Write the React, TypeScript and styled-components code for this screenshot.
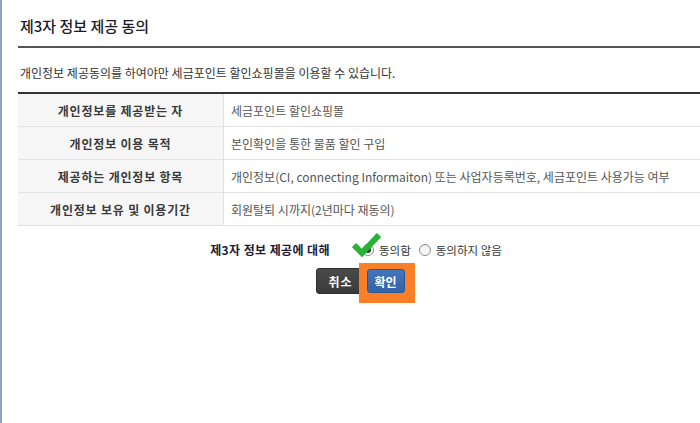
import * as React from 'react';
import styled, { createGlobalStyle } from 'styled-components';

const GlobalStyle = createGlobalStyle`
	html, body {
		margin: 0;
		padding: 0;
		background: #fff;
	}
	body {
		font-family: 'Noto Sans CJK KR', 'Liberation Sans', sans-serif;
		color: #333;
	}
`;

const Page = styled.div`
	min-height: 100vh;
	box-sizing: border-box;
	border-left: 2px solid #8ba3c3;
	padding-left: 16px;
`;

const Title = styled.h2`
	margin: 0;
	padding: 16px 0 10px 2px;
	font-size: 15px;
	line-height: 20px;
	font-weight: 500;
	color: #1b1b2b;
	border-bottom: 2px solid #555;
`;

const Desc = styled.p`
	margin: 18px 0 12px 2px;
	font-size: 12px;
	line-height: 14px;
	color: #333;
`;

const Table = styled.div`
	border-top: 2px solid #333;
`;

const Row = styled.div`
	display: flex;
	height: 32px;
	border-bottom: 1px solid #e2e2e2;
`;

const Label = styled.div`
	flex: 0 0 205px;
	display: flex;
	align-items: center;
	justify-content: center;
	background: #f6f6f6;
	border-right: 1px solid #e2e2e2;
	font-size: 12px;
	font-weight: 700;
	color: #3a3a3a;
	letter-spacing: 0.8px;
`;

const Value = styled.div`
	flex: 1;
	display: flex;
	align-items: center;
	padding-left: 7px;
	font-size: 12px;
	color: #555;
`;

const Consent = styled.div`
	display: flex;
	align-items: center;
	justify-content: center;
	margin-top: 16px;
	padding-right: 6px;
	font-size: 11.5px;
	line-height: 16px;
`;

const ConsentTitle = styled.strong`
	font-size: 12px;
	font-weight: 700;
	color: #221a33;
	margin-right: 32px;
	letter-spacing: 0.4px;
`;

const Option = styled.label`
	position: relative;
	display: flex;
	align-items: center;
	gap: 5px;
	color: #333;
	& + & {
		margin-left: 8px;
	}
`;

const Radio = styled.span<{ $checked?: boolean }>`
	width: 12px;
	height: 12px;
	border-radius: 50%;
	border: 1px solid #8a8a8a;
	background: linear-gradient(#eee, #fff);
	box-sizing: border-box;
	display: inline-flex;
	align-items: center;
	justify-content: center;
	&::after {
		content: '';
		display: ${p => (p.$checked ? 'block' : 'none')};
		width: 6px;
		height: 6px;
		border-radius: 50%;
		background: #333;
	}
`;

const CheckMark = styled.svg`
	position: absolute;
	left: -10px;
	top: -10px;
	width: 30px;
	height: 26px;
	pointer-events: none;
`;

const Buttons = styled.div`
	display: flex;
	justify-content: center;
	align-items: center;
	gap: 2px;
	margin-top: 10px;
	padding-left: 3px;
`;

const Button = styled.button<{ $tone: 'dark' | 'blue' }>`
	position: relative;
	margin: 0;
	height: ${p => (p.$tone === 'dark' ? '26px' : '24px')};
	padding: 0 ${p => (p.$tone === 'dark' ? '11px' : '7px')};
	border-radius: 3px;
	border: 1px solid ${p => (p.$tone === 'dark' ? '#2e2e2e' : '#2c5796')};
	background: ${p => (p.$tone === 'dark' ? 'linear-gradient(#4a4a4a, #3a3a3a)' : 'linear-gradient(#4176bd, #3564a8)')};
	color: #fff;
	font-family: inherit;
	font-size: 12px;
	font-weight: 700;
	letter-spacing: ${p => (p.$tone === 'dark' ? '1px' : '0')};
	cursor: pointer;
`;

const Highlight = styled.span`
	position: relative;
	display: inline-flex;
	&::before {
		content: '';
		position: absolute;
		left: -8px;
		right: -10px;
		top: -6px;
		bottom: -10px;
		background: #fb7f26;
	}
	& > * {
		position: relative;
	}
`;

const rows: [string, string][] = [
	['개인정보를 제공받는 자', '세금포인트 할인쇼핑몰'],
	['개인정보 이용 목적', '본인확인을 통한 물품 할인 구입'],
	['제공하는 개인정보 항목', '개인정보(CI, connecting Informaiton) 또는 사업자등록번호, 세금포인트 사용가능 여부'],
	['개인정보 보유 및 이용기간', '회원탈퇴 시까지(2년마다 재동의)'],
];

export default function App() {
	return (
		<>
			<GlobalStyle />
			<Page>
				<Title>제3자 정보 제공 동의</Title>
				<Desc>개인정보 제공동의를 하여야만 세금포인트 할인쇼핑몰을 이용할 수 있습니다.</Desc>
				<Table>
					{rows.map(([label, value]) => (
						<Row key={label}>
							<Label>{label}</Label>
							<Value>{value}</Value>
						</Row>
					))}
				</Table>
				<Consent>
					<ConsentTitle>제3자 정보 제공에 대해</ConsentTitle>
					<Option>
						<Radio $checked />
						동의함
						{/* green check annotation over the selected radio */}
						<CheckMark viewBox="0 0 30 26">
							<path d="M2 13 L10 21 L27 3" fill="none" stroke="#27b335" strokeWidth="6" strokeLinecap="butt" strokeLinejoin="miter" />
						</CheckMark>
					</Option>
					<Option>
						<Radio />
						동의하지 않음
					</Option>
				</Consent>
				<Buttons>
					<Button $tone="dark">취소</Button>
					<Highlight>
						<Button $tone="blue">확인</Button>
					</Highlight>
				</Buttons>
			</Page>
		</>
	);
}
